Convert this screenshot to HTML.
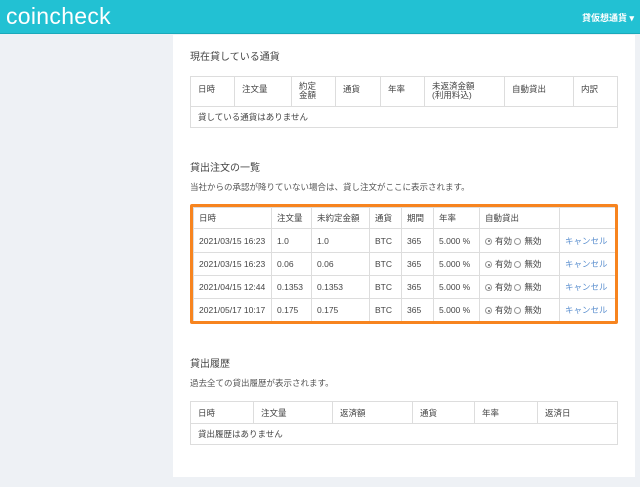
<!DOCTYPE html>
<html><head><meta charset="utf-8"><style>
*{margin:0;padding:0;box-sizing:border-box}
body{width:640px;height:487px;background:#eef1f5;font-family:"Liberation Sans","Noto Sans CJK JP",sans-serif;color:#444;font-size:9px;position:relative;overflow:hidden}
.hdr{position:absolute;left:0;top:0;width:640px;height:34px;background:#22c1d3;border-bottom:1px solid #1aa9ba}
.logo{position:absolute;left:6px;top:3px;color:#fff;font-size:23px;font-weight:300;letter-spacing:0.3px}
.menu{position:absolute;right:6px;top:11px;color:#fff;font-size:9px;font-weight:bold}
.panel{position:absolute;left:173px;top:35px;width:462px;height:442px;background:#fff}
.t{position:absolute;font-size:10px;color:#444}
.s{position:absolute;font-size:8.5px;color:#555}
table{position:absolute;border-collapse:collapse;table-layout:fixed}
td{border:1px solid #ddd;padding:0 0 0 7px;font-size:8.5px;color:#444;vertical-align:middle;white-space:nowrap}
.o td{padding-left:5px}
.ob{position:absolute;left:190px;top:204px;width:428px;height:120px;border:3px solid #f7841f;border-radius:2px}
.a{color:#5b8fcf}
.r{display:inline-block;width:7px;height:7px;border:1px solid #999;border-radius:50%;vertical-align:-1px;margin-right:3px;position:relative}
.r.on::after{content:"";position:absolute;left:1.5px;top:1.5px;width:2px;height:2px;border-radius:50%;background:#666}
</style></head><body>
<div class="hdr"><div class="logo">coincheck</div><div class="menu">貸仮想通貨 ▾</div></div>
<div class="panel"></div>
<div class="t" style="left:190px;top:48px">現在貸している通貨</div>
<table style="left:190px;top:76px;width:427px">
<colgroup><col style="width:44px"><col style="width:57px"><col style="width:44px"><col style="width:45px"><col style="width:44px"><col style="width:80px"><col style="width:69px"><col style="width:44px"></colgroup>
<tr style="height:30px"><td style="vertical-align:top;padding-top:6px">日時</td><td style="vertical-align:top;padding-top:6px">注文量</td><td style="vertical-align:top;padding-top:5px;line-height:9px">約定<br>金額</td><td style="vertical-align:top;padding-top:6px">通貨</td><td style="vertical-align:top;padding-top:6px">年率</td><td style="vertical-align:top;padding-top:5px;line-height:9px">未返済金額<br>(利用料込)</td><td style="vertical-align:top;padding-top:6px">自動貸出</td><td style="vertical-align:top;padding-top:6px">内訳</td></tr>
<tr style="height:21px"><td colspan="8">貸している通貨はありません</td></tr>
</table>
<div class="t" style="left:190px;top:159px">貸出注文の一覧</div>
<div class="s" style="left:190px;top:181px">当社からの承認が降りていない場合は、貸し注文がここに表示されます。</div>
<table class="o" style="left:193px;top:207px;width:422px">
<colgroup><col style="width:78px"><col style="width:40px"><col style="width:58px"><col style="width:32px"><col style="width:32px"><col style="width:46px"><col style="width:80px"><col style="width:56px"></colgroup>
<tr style="height:21px"><td>日時</td><td>注文量</td><td>未約定金額</td><td>通貨</td><td>期間</td><td>年率</td><td>自動貸出</td><td></td></tr>
<tr style="height:24px"><td>2021/03/15 16:23</td><td>1.0</td><td>1.0</td><td>BTC</td><td>365</td><td>5.000 %</td><td><span class="r on"></span>有効 <span class="r"></span>無効</td><td class="a">キャンセル</td></tr>
<tr style="height:23px"><td>2021/03/15 16:23</td><td>0.06</td><td>0.06</td><td>BTC</td><td>365</td><td>5.000 %</td><td><span class="r on"></span>有効 <span class="r"></span>無効</td><td class="a">キャンセル</td></tr>
<tr style="height:23px"><td>2021/04/15 12:44</td><td>0.1353</td><td>0.1353</td><td>BTC</td><td>365</td><td>5.000 %</td><td><span class="r on"></span>有効 <span class="r"></span>無効</td><td class="a">キャンセル</td></tr>
<tr style="height:23px"><td>2021/05/17 10:17</td><td>0.175</td><td>0.175</td><td>BTC</td><td>365</td><td>5.000 %</td><td><span class="r on"></span>有効 <span class="r"></span>無効</td><td class="a">キャンセル</td></tr>
</table>
<div class="ob"></div>
<div class="t" style="left:190px;top:355px">貸出履歴</div>
<div class="s" style="left:190px;top:377px">過去全ての貸出履歴が表示されます。</div>
<table style="left:190px;top:401px;width:427px">
<colgroup><col style="width:63px"><col style="width:79px"><col style="width:80px"><col style="width:62px"><col style="width:63px"><col style="width:80px"></colgroup>
<tr style="height:22px"><td>日時</td><td>注文量</td><td>返済額</td><td>通貨</td><td>年率</td><td>返済日</td></tr>
<tr style="height:21px"><td colspan="6">貸出履歴はありません</td></tr>
</table>
</body></html>
